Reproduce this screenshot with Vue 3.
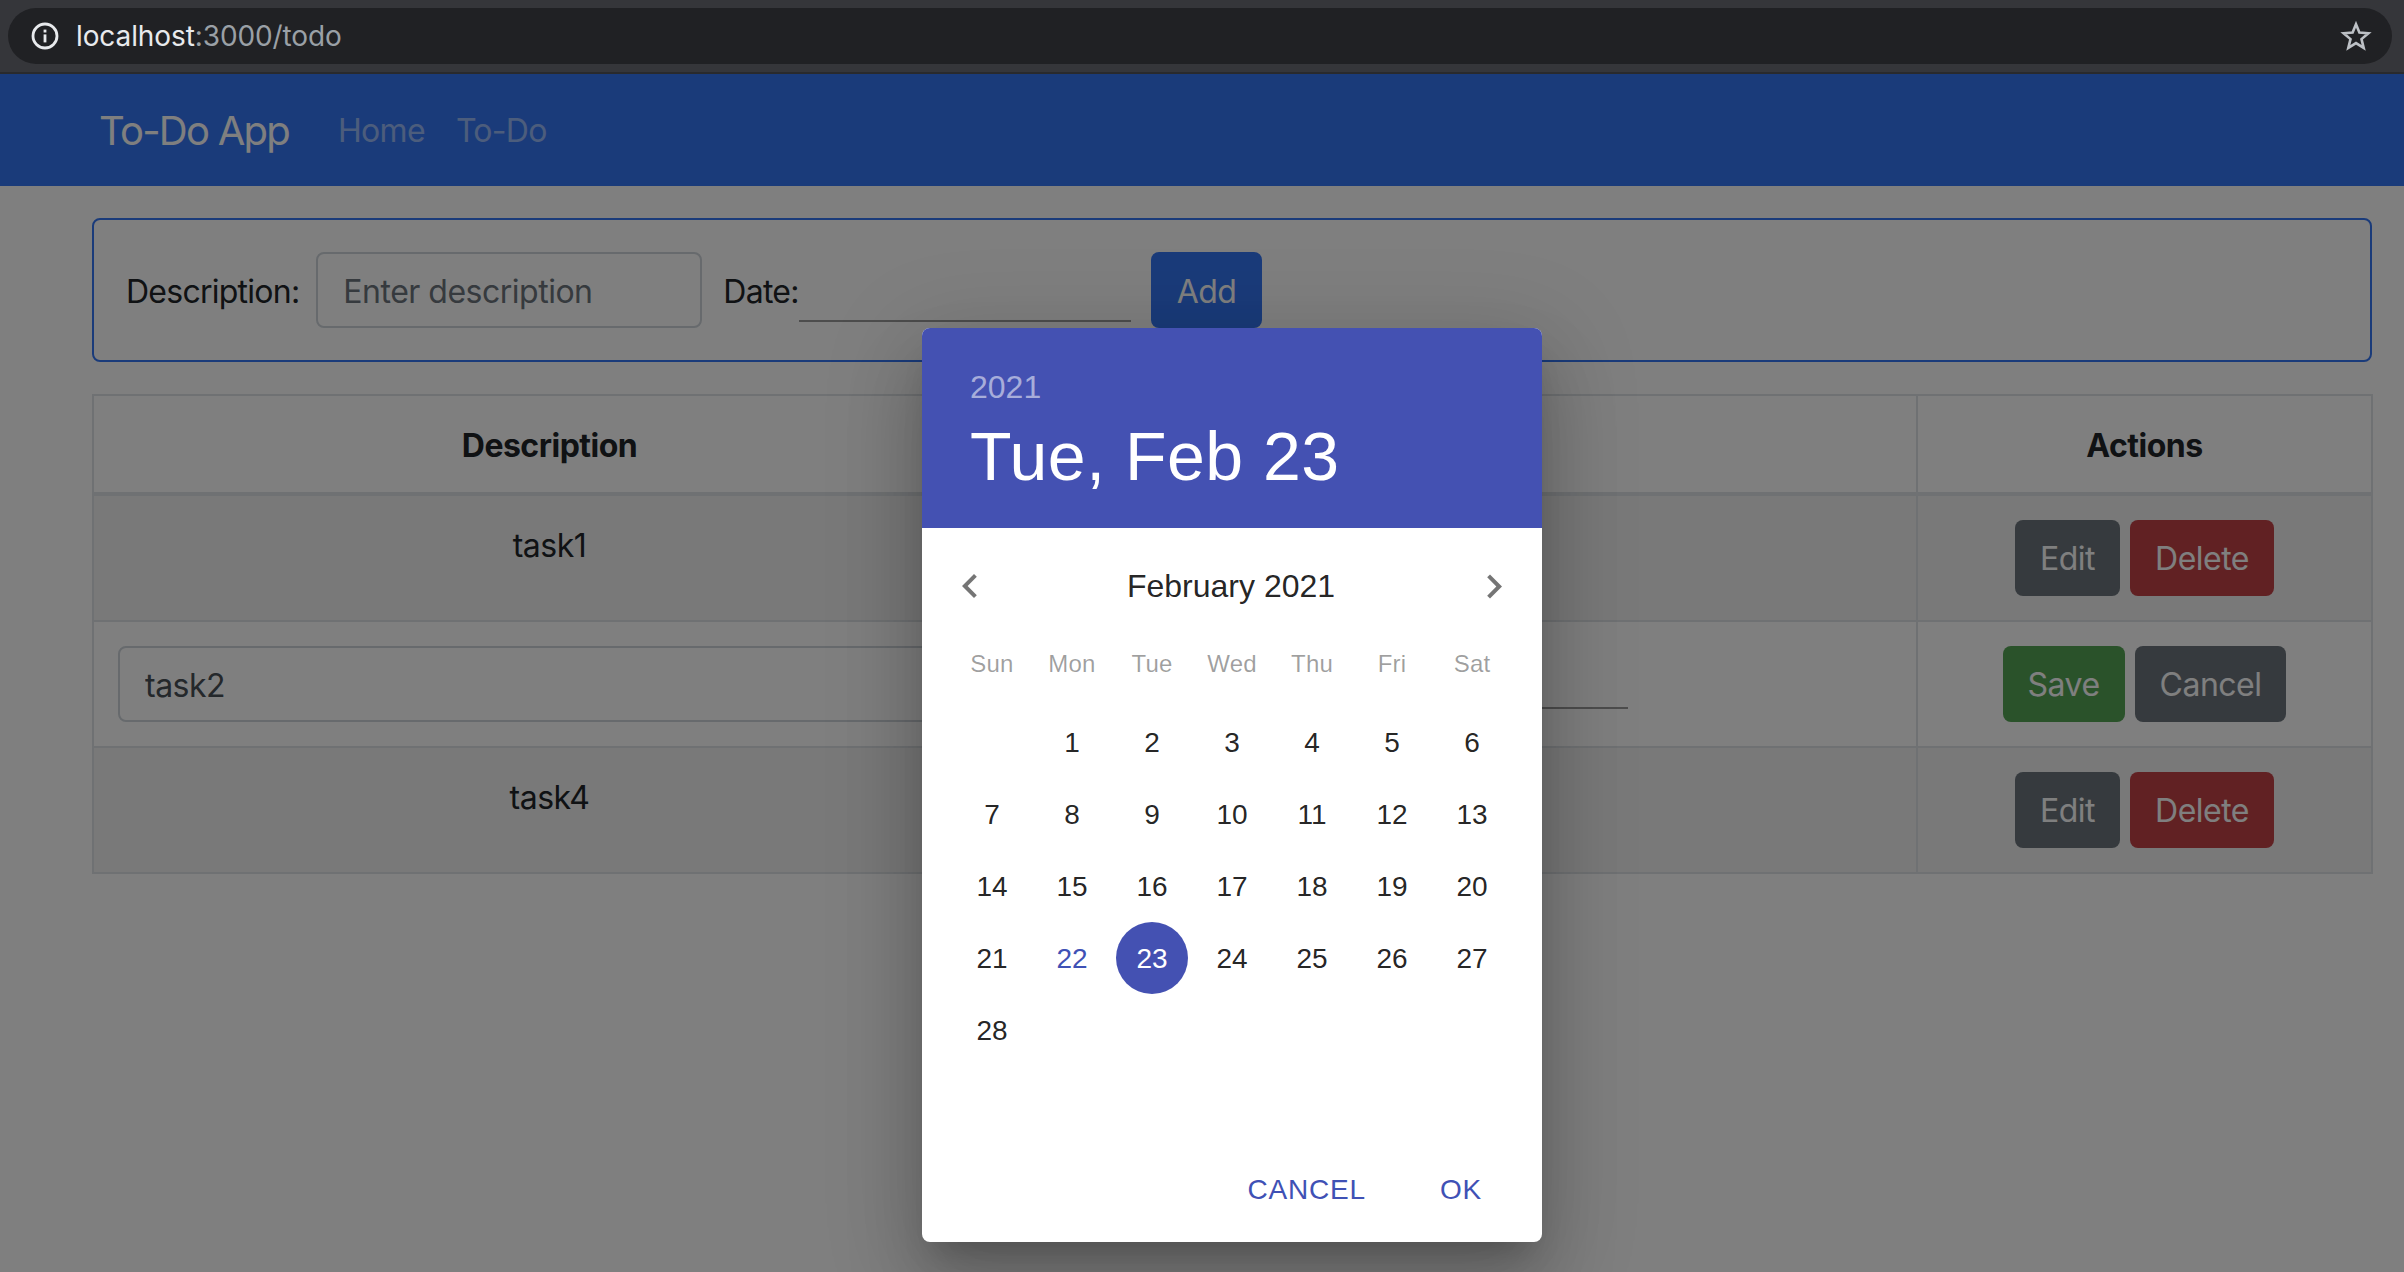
<template>
  <div class="screen">
    <div class="browser-bar">
      <div class="url-pill">
        <svg class="info-icon" width="28" height="28" viewBox="0 0 28 28">
          <circle cx="14" cy="14" r="12" fill="none" stroke="#e8eaed" stroke-width="2.8" />
          <rect x="12.6" y="12.4" width="2.8" height="8" fill="#e8eaed" />
          <rect x="12.6" y="7.6" width="2.8" height="2.9" fill="#e8eaed" />
        </svg>
        <span class="url"><span class="host">localhost</span>:3000/todo</span>
        <svg class="star-icon" width="32" height="32" viewBox="0 0 32 32">
          <path d="M16 4.2l3.4 8.4 9 .7-6.9 5.8 2.2 8.8-7.7-4.8-7.7 4.8 2.2-8.8-6.9-5.8 9-.7z" fill="none" stroke="#bdc1c6" stroke-width="2.6" stroke-linejoin="miter" />
        </svg>
      </div>
    </div>

    <div class="page">
      <nav class="navbar">
        <span class="brand">To-Do App</span>
        <a class="nav-link">Home</a>
        <a class="nav-link">To-Do</a>
      </nav>

      <div class="content">
        <form class="add-card" @submit.prevent>
          <label class="form-label first">Description:</label>
          <input class="text-input add-desc" placeholder="Enter description" />
          <label class="form-label date-label">Date:</label>
          <input class="date-input" />
          <button class="btn primary add-btn" type="button">Add</button>
        </form>

        <table class="todo-table">
          <colgroup>
            <col class="col-desc" />
            <col class="col-date" />
            <col class="col-actions" />
          </colgroup>
          <thead>
            <tr>
              <th>Description</th>
              <th></th>
              <th>Actions</th>
            </tr>
          </thead>
          <tbody>
            <template v-for="row in rows" :key="row.name">
              <tr v-if="row.editing">
                <td><input class="text-input full" :value="row.name" /></td>
                <td><input class="date-input cell-date" /></td>
                <td class="actions">
                  <button class="btn success" type="button">Save</button>
                  <button class="btn secondary" type="button">Cancel</button>
                </td>
              </tr>
              <tr v-else class="striped">
                <td class="task-name">{{ row.name }}</td>
                <td></td>
                <td class="actions">
                  <button class="btn secondary" type="button">Edit</button>
                  <button class="btn danger" type="button">Delete</button>
                </td>
              </tr>
            </template>
          </tbody>
        </table>
      </div>

      <div class="backdrop">
        <div class="picker">
          <div class="picker-head">
            <div class="picker-year">2021</div>
            <div class="picker-date">Tue, Feb 23</div>
          </div>

          <div class="month-bar">
            <svg class="chevron" width="48" height="48" viewBox="0 0 24 24">
              <path d="M15.41 16.09l-4.58-4.59 4.58-4.59L14 5.5l-6 6 6 6z" />
            </svg>
            <span class="month-name">February 2021</span>
            <svg class="chevron" width="48" height="48" viewBox="0 0 24 24">
              <path d="M8.59 16.34l4.58-4.59-4.58-4.59L10 5.75l6 6-6 6z" />
            </svg>
          </div>

          <div class="week-row">
            <span v-for="d in weekdays" :key="d" class="week-cell">{{ d }}</span>
          </div>

          <div class="day-grid">
            <span
              v-for="(d, i) in days"
              :key="i"
              class="day"
              :class="{ today: d === 22, selected: d === 23 }"
            >{{ d }}</span>
          </div>

          <div class="picker-actions">
            <button class="text-btn" type="button">Cancel</button>
            <button class="text-btn" type="button">OK</button>
          </div>
        </div>
      </div>
    </div>
  </div>
</template>

<script setup>
const rows = [
  { name: 'task1', editing: false },
  { name: 'task2', editing: true },
  { name: 'task4', editing: false }
]

const weekdays = ['Sun', 'Mon', 'Tue', 'Wed', 'Thu', 'Fri', 'Sat']

// feb 2021 starts on a monday
const days = ['', ...Array.from({ length: 28 }, (_, i) => i + 1)]
</script>

<style>
html, body {
  margin: 0;
  overflow: hidden;
}
</style>

<style scoped>
.screen {
  width: 2404px;
  height: 1272px;
  display: flex;
  flex-direction: column;
  font-family: Inter, "Liberation Sans", sans-serif;
  color: #212529;
  background: #fff;
}

/* browser chrome */
.browser-bar {
  height: 74px;
  box-sizing: border-box;
  padding: 8px 12px 0 8px;
  background: #35363a;
  border-bottom: 2px solid #292a2d;
}
.url-pill {
  height: 56px;
  display: flex;
  align-items: center;
  padding: 0 20px 0 23px;
  background: #202124;
  border-radius: 28px;
}
.url {
  margin-left: 17px;
  font-size: 28px;
  letter-spacing: -0.1px;
  color: #9aa0a6;
}
.host { color: #e8eaed; }
.star-icon { margin-left: auto; }

.page {
  position: relative;
  flex: 1;
}

/* navbar */
.navbar {
  height: 112px;
  display: flex;
  align-items: center;
  padding-left: 99px;
  background: #3476f4;
}
.brand {
  font-size: 40px;
  letter-spacing: -1.75px;
  color: #fff;
  margin-right: 49px;
}
.nav-link {
  font-size: 32px;
  letter-spacing: -0.7px;
  color: rgba(255, 255, 255, 0.5);
  margin-right: 31px;
}

.content {
  padding: 32px 32px 0 92px;
}

/* add form */
.add-card {
  height: 144px;
  box-sizing: border-box;
  display: flex;
  align-items: center;
  padding: 0 32px;
  border: 2px solid #3476f4;
  border-radius: 8px;
  margin-bottom: 32px;
}
.form-label {
  padding-top: 2px;
  font-size: 32px;
  letter-spacing: -0.75px;
}
.first { margin-right: 17px; }
.date-label { margin-left: 21px; }
.text-input {
  height: 76px;
  box-sizing: border-box;
  padding: 2px 25px 0;
  font: inherit;
  font-size: 32px;
  letter-spacing: -0.5px;
  color: #495057;
  background: #fff;
  border: 2px solid #ced4da;
  border-radius: 8px;
  outline: none;
}
.text-input::placeholder { color: #6c757d; opacity: 1; }
.add-desc { width: 386px; }
.full { width: 100%; }
.date-input {
  width: 332px;
  height: 60px;
  box-sizing: border-box;
  padding: 0;
  background: transparent;
  border: none;
  border-bottom: 2px solid #9b9b9b;
  outline: none;
}
.add-card .date-input { margin-top: 3px; }
.cell-date {
  display: block;
  margin: 3px auto 0;
}

/* buttons */
.btn {
  height: 76px;
  box-sizing: border-box;
  padding: 2px 25px 0;
  font: inherit;
  font-size: 32px;
  letter-spacing: -0.5px;
  color: #fff;
  border: none;
  border-radius: 8px;
}
.btn.add-btn {
  margin-left: 20px;
  padding: 2px 26px 0;
}
.primary { background: #3476f4; }
.secondary { background: #6c757d; }
.danger { background: #c24246; }
.success { background: #54a454; }

/* table */
.todo-table {
  width: 2279px;
  table-layout: fixed;
  border-collapse: collapse;
  font-size: 32px;
  letter-spacing: -0.5px;
  line-height: 48px;
  text-align: center;
}
.col-desc { width: 913px; }
.col-date { width: 911px; }
.col-actions { width: 455px; }
.todo-table th,
.todo-table td {
  padding: 24px;
  border: 2px solid #dee2e6;
  vertical-align: top;
}
.todo-table th {
  padding: 26px 24px 22px;
  font-weight: 700;
  border-bottom-width: 4px;
}
.todo-table td.task-name {
  padding: 26px 24px 22px;
}
.striped td { background: rgba(0, 0, 0, 0.05); }
.actions .btn + .btn { margin-left: 10px; }

/* date picker dialog */
.backdrop {
  position: absolute;
  inset: 0;
  background: rgba(0, 0, 0, 0.5);
}
.picker {
  position: absolute;
  left: 922px;
  top: 254px;
  width: 620px;
  height: 914px;
  display: flex;
  flex-direction: column;
  font-family: "Liberation Sans", Arial, sans-serif;
  background: #fff;
  border-radius: 8px;
  box-shadow: 0 22px 30px -14px rgba(0, 0, 0, 0.2), 0 48px 76px 6px rgba(0, 0, 0, 0.14), 0 18px 92px 16px rgba(0, 0, 0, 0.12);
}
.picker-head {
  height: 200px;
  box-sizing: border-box;
  padding: 40px 48px 0;
  background: #4451b2;
  color: #fff;
  border-radius: 8px 8px 0 0;
}
.picker-year {
  font-size: 32px;
  line-height: 38px;
  color: rgba(255, 255, 255, 0.54);
}
.picker-date {
  margin-top: 10px;
  font-size: 68px;
  line-height: 80px;
  letter-spacing: 0.5px;
}
.month-bar {
  display: flex;
  align-items: center;
  justify-content: space-between;
  height: 48px;
  margin-top: 34px;
  padding: 0 24px;
}
.chevron {
  margin-top: 2px;
  fill: rgba(0, 0, 0, 0.54);
}
.month-name {
  margin-right: 2px;
  font-size: 32px;
  color: rgba(0, 0, 0, 0.87);
}
.week-row {
  display: grid;
  grid-template-columns: repeat(7, 80px);
  justify-content: center;
  margin-top: 34px;
  height: 40px;
  line-height: 40px;
}
.week-cell {
  font-size: 24px;
  letter-spacing: 0.2px;
  text-align: center;
  color: rgba(0, 0, 0, 0.38);
}
.day-grid {
  display: grid;
  grid-template-columns: repeat(7, 80px);
  grid-auto-rows: 72px;
  justify-content: center;
  margin-top: 22px;
}
.day {
  justify-self: center;
  width: 72px;
  height: 72px;
  line-height: 74px;
  text-align: center;
  font-size: 28px;
  border-radius: 50%;
  color: rgba(0, 0, 0, 0.87);
}
.day.today { color: #3f51b5; }
.day.selected {
  color: #fff;
  background: #4451b2;
}
.picker-actions {
  display: flex;
  justify-content: flex-end;
  gap: 42px;
  margin-top: auto;
  padding: 0 44px 16px 0;
}
.text-btn {
  height: 72px;
  padding: 0 16px;
  font: inherit;
  font-size: 28px;
  letter-spacing: 0.8px;
  text-transform: uppercase;
  color: #3f51b5;
  background: none;
  border: none;
}
</style>
